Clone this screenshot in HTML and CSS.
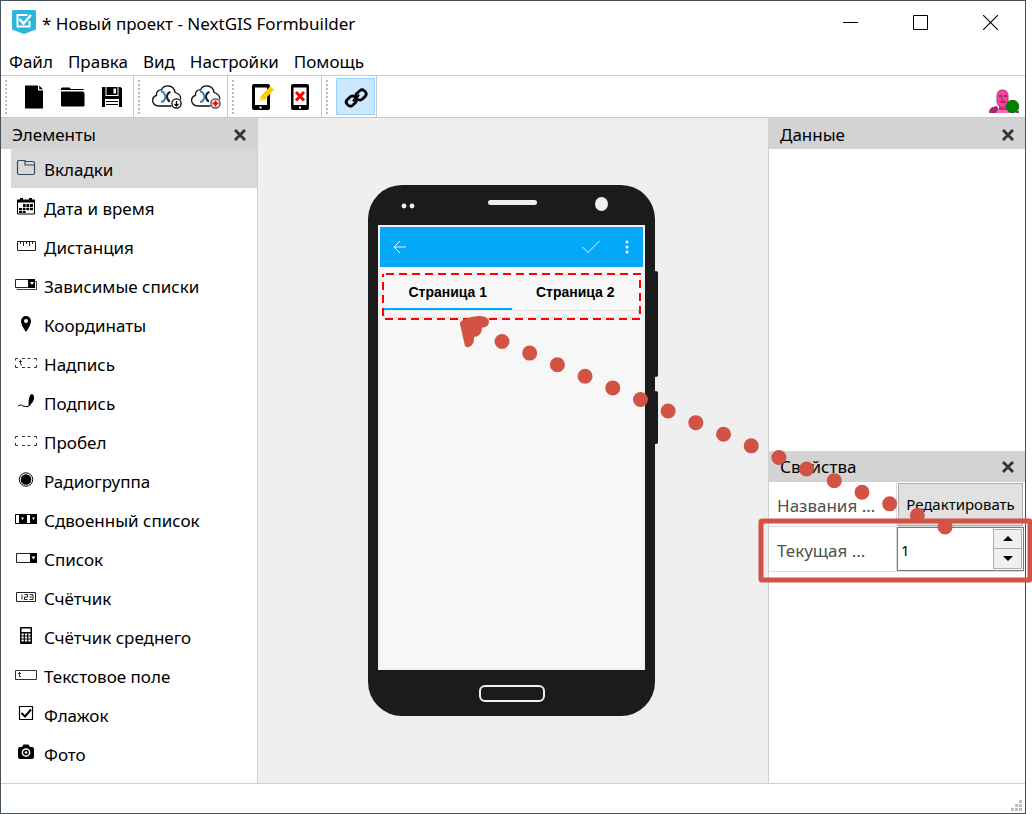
FILE: index.html
```html
<!DOCTYPE html>
<html lang="ru">
<head>
<meta charset="utf-8">
<title>* Новый проект - NextGIS Formbuilder</title>
<link rel="stylesheet" href="styles.css">
</head>
<body>
<div class="window">
  <header class="titlebar">
    <svg class="app-icon" width="24" height="24" viewBox="0 0 24 24"><path d="M1 0h22l1 1v18.500l-12 4.500-12-4.500V1z" fill="#2fb5dc"/><path d="M15.500 5H5.500v11.500h12V11" fill="none" stroke="#fff" stroke-width="2"/><path d="M7.500 9l4 4.500L19 5" fill="none" stroke="#fff" stroke-width="2.500"/></svg>
    <h1 class="title">* Новый проект - NextGIS Formbuilder</h1>
    <div class="window-buttons">
      <button aria-label="Свернуть"><svg width="15" height="15"><path d="M0 7.500h15" stroke="#000"/></svg></button>
      <button aria-label="Развернуть"><svg width="15" height="15"><path d="M.5.500h14v14H.5z" fill="none" stroke="#000"/></svg></button>
      <button aria-label="Закрыть"><svg width="15" height="15"><path d="M0 0l15 15M15 0L0 15" stroke="#000" stroke-width="1.100"/></svg></button>
    </div>
  </header>
  <nav class="menu">
    <button>Файл</button><button>Правка</button><button>Вид</button><button>Настройки</button><button>Помощь</button>
  </nav>
  <div class="toolbar">
    <div class="tool-group">
      <button class="tool" aria-label="Создать"><svg width="30" height="30" viewBox="0 0 30 30"><path d="M6 3.500h13v5h5V26.500H6z"/><path d="M20.200 3.500l3.800 3.800h-3.800z"/></svg></button>
      <button class="tool" aria-label="Открыть"><svg width="30" height="30" viewBox="0 0 30 30"><path d="M3 8V6.500l1-1h7.500l1.500 1.500h12.500v1H3z"/><path d="M3 9.500h22l1.500 1.500v12.500l-1 1H4l-1-1z"/></svg></button>
      <button class="tool" aria-label="Сохранить"><svg width="30" height="30" viewBox="0 0 30 30"><path d="M5 5h3.500v9h13V5h2L25 6.500V25H5z"/><path d="M9.500 5h11v8h-11z"/><path d="M16.500 6.500h2.500v5h-2.500z" fill="#fff"/><path d="M8 17h14v8H8z" fill="#fff"/><path d="M9 19.500h12M9 22.500h12" stroke="#000" stroke-width="1.200"/></svg></button>
    </div>
    <div class="tool-group">
      <button class="tool" aria-label="Загрузить"><svg width="30" height="30" viewBox="0 0 30 30"><path d="M19.500 24H7C-1 23.500-1 15 4.500 13.500c-.5-3.500 2-6 5-5.500C12 2 22 2.500 23 10.500c5 1.500 6 4.500 5.500 7" fill="none" stroke="#111" stroke-width="1.300"/><path d="M9 9.500q3.500 0 4.500 5.500-1 4.500-4.500 5M11 20q1.500-1.500 3-5" fill="none" stroke="#2a7fc8" stroke-width="1.800"/><path d="M18.500 10q-3.500 1-3.500 5 .5 3.500 3 4.500" fill="none" stroke="#222" stroke-width="2"/><circle cx="24.500" cy="21.500" r="4.600" fill="#fff" stroke="#000" stroke-width="1.300"/><path d="M24.500 19v5M22.500 22l2 2 2-2" fill="none" stroke="#000" stroke-width="1.300"/></svg></button>
      <button class="tool" aria-label="Добавить подключение"><svg width="30" height="30" viewBox="0 0 30 30"><path d="M19.500 24H7C-1 23.500-1 15 4.500 13.500c-.5-3.500 2-6 5-5.500C12 2 22 2.500 23 10.500c5 1.500 6 4.500 5.500 7" fill="none" stroke="#111" stroke-width="1.300"/><path d="M9 9.500q3.500 0 4.500 5.500-1 4.500-4.500 5M11 20q1.500-1.500 3-5" fill="none" stroke="#2a7fc8" stroke-width="1.800"/><path d="M18.500 10q-3.500 1-3.500 5 .5 3.500 3 4.500" fill="none" stroke="#222" stroke-width="2"/><circle cx="24.500" cy="21.500" r="4.600" fill="#fff" stroke="#333" stroke-width="1.200"/><path d="M24.500 18.500v6M21.500 21.500h6" fill="none" stroke="#f00" stroke-width="2"/></svg></button>
    </div>
    <div class="tool-group">
      <button class="tool" aria-label="Изменить экран"><svg width="30" height="30" viewBox="0 0 30 30"><rect x="6" y="2" width="18" height="26" rx="2"/><path d="M9 5.500h12V23H9z" fill="#fff"/><path d="M13.500 24.500h2v2h-2z" fill="#fff"/><path d="M13.500 19.500l1-5L24 4.500l4 3-9.500 10.500z" fill="#fc0"/><path d="M14.500 15l3.500 3-4 1.500z" fill="#ffe27a"/></svg></button>
      <button class="tool" aria-label="Удалить экран"><svg width="30" height="30" viewBox="0 0 30 30"><rect x="6" y="2" width="18" height="26" rx="2"/><path d="M8.500 5.500h13V23h-13z" fill="#fff"/><path d="M14 24.500h2v2h-2z" fill="#fff"/><path d="M11 10l8 8.500M19 10l-8 8.500" stroke="#f00" stroke-width="3"/></svg></button>
    </div>
    <div class="tool-group">
      <button class="tool tool-on" aria-label="Связь" aria-pressed="true"><svg width="30" height="30" viewBox="0 0 30 30" fill="none" stroke="#000" stroke-width="2.800" stroke-linecap="round"><path d="M14 15l-2-1q-1.500-.5-3 1l-3 3q-1.800 2 0 4l1.500 1.500q2 1.500 4 0l3-3q1.500-1.500.5-3.500"/><path d="M17 17.500l1.500.5q1.500.3 3-1l3-3q1.500-2 0-4L23 8.500q-2-1.500-4 0l-3.500 3.300q-1.500 1.500-.5 3.500"/><path d="M12.500 18.500l5-5" stroke-width="2.200"/></svg></button>
    </div>
    <button class="user" aria-label="Пользователь"><svg width="32" height="26" viewBox="0 0 32 26"><path d="M1 25q0-5 4-6l4-1 3 7z" fill="#a8286c"/><path d="M8 25l3-5h12l3 5z" fill="#ff67b2"/><path d="M28 23h3v2h-3z" fill="#a8286c"/><path d="M11 17h8v5h-8z" fill="#c82a7c"/><path d="M9 8q0-6 5.500-6T20 8v6q-1 5-4.500 5.500Q9 19 9 13z" fill="#ff3da2" stroke="#a53a75"/><path d="M11 8h3M16 8h3M12.500 14h5" stroke="#802050" stroke-width="1.300"/><path d="M14 8v4h2" fill="none" stroke="#b02870"/><circle cx="24.500" cy="18.500" r="6.700" fill="#008000"/></svg></button>
  </div>
  <main class="workspace">
    <section class="dock dock-left">
      <header class="dock-head"><h2>Элементы</h2><button aria-label="Закрыть"><svg width="12" height="12"><path d="M1 1l10 10M11 1L1 11" stroke="#333" stroke-width="2.800"/></svg></button></header>
      <ul class="elements">
        <li><button class="current"><svg width="22" height="18" viewBox="0 0 22 18" fill="none" stroke="#34495e" stroke-width="1.200"><path d="M2.500 3q0-1.500 1.500-1.500h6V6h9.500v8q0 1.500-1.500 1.500H4q-1.500 0-1.500-1.500zM10 2.500h8q1.500 0 1.500 1.500v2"/></svg>Вкладки</button></li>
        <li><button><svg width="22" height="18" viewBox="0 0 22 18"><path d="M2.500 2.500h17v13.500h-17z" fill="#fff" stroke="#000"/><path d="M2 1.500h3V0h3v1.500h6V0h3v1.500h3v3H2z"/><path d="M8 6h10v4H8zM4 10h14v3H4zM4 13h7v2H4z"/><path d="M4 9.500h14M4 12.500h14M7.500 6v9M11 6v9M14.500 6v9" stroke="#fff" stroke-width=".8"/></svg>Дата и время</button></li>
        <li><button><svg width="22" height="18" viewBox="0 0 22 18" fill="none" stroke="#222"><path d="M2.500 4.500h18v9h-18z"/><path d="M5.500 5v2M8.500 5v4M11.500 5v2M14.500 5v4M17.500 5v2"/></svg>Дистанция</button></li>
        <li><button><svg width="22" height="18" viewBox="0 0 22 18"><path d="M2 12.500v1h19.500v-8h-2" fill="none" stroke="#444"/><path d="M.5 3.500h19v8H.5z" fill="#fff" stroke="#222"/><path d="M13 3h7v9h-7z"/><path d="M15 6h4l-2 3z" fill="#fff"/></svg>Зависимые списки</button></li>
        <li><button><svg width="22" height="18" viewBox="0 0 22 18"><path d="M11 17q-5-7-5-11a5 5 0 0 1 10 0q0 4-5 11z"/><circle cx="11" cy="6" r="2" fill="#fff"/></svg>Координаты</button></li>
        <li><button><svg width="22" height="18" viewBox="0 0 22 18" fill="none" stroke="#333"><path d="M.5 6.500v-2H3M.5 11v2.500H3M19 4.500h2.500v2M21.500 11v2.500H19M7 4.500h3M12.500 4.500h3M7 13.500h3M12.500 13.500h3"/><path d="M5.500 5.500v4.500q0 1 1.500 1M4 7.500h3"/></svg>Надпись</button></li>
        <li><button><svg width="22" height="18" viewBox="0 0 22 18"><path d="M13.500 12q0-9.500 3-11 3 .5 2.500 5-1 4-3 5l-1 2z"/><path d="M3 13q3-2.500 5 0 3 1 5.500.5l2-4" fill="none" stroke="#000"/></svg>Подпись</button></li>
        <li><button><svg width="22" height="18" viewBox="0 0 22 18" fill="none" stroke="#333"><path d="M.5 6.500v-2H3M.5 11v2.500H3M19 4.500h2.500v2M21.500 11v2.500H19M7 4.500h3M12.500 4.500h3M7 13.500h3M12.500 13.500h3"/></svg>Пробел</button></li>
        <li><button><svg width="22" height="18" viewBox="0 0 22 18"><circle cx="11" cy="8.500" r="6.700" fill="none" stroke="#000" stroke-width="1"/><circle cx="11" cy="8.500" r="5.300"/></svg>Радиогруппа</button></li>
        <li><button><svg width="22" height="18" viewBox="0 0 22 18"><path d="M.5 4.500h21v9H.5z" fill="#fff" stroke="#000"/><path d="M4 4h7v10H4zM15 4h7v10h-7zM10 4h2v10h-2z"/><path d="M12 5h2.500v8H12zM6 7.500h3l-1.500 2.500zM17 7.500h3l-1.500 2.500z" fill="#fff"/></svg>Сдвоенный список</button></li>
        <li><button><svg width="22" height="18" viewBox="0 0 22 18"><path d="M1.500 4.500h20v9h-20z" fill="#fff" stroke="#222"/><path d="M15 4h7v10h-7z"/><path d="M16.500 7.500h4l-2 3z" fill="#fff"/></svg>Список</button></li>
        <li><button><svg width="22" height="18" viewBox="0 0 22 18" fill="none" stroke="#222"><path d="M1.500 4.500h19v9h-19z"/><path d="M7 6.500v5M9.500 6.500h3v2.500h-3v2.500h3M14.500 6.500h3.500v5h-3.500M14.500 9h3"/></svg>Счётчик</button></li>
        <li><button><svg width="22" height="18" viewBox="0 0 22 18"><rect x="5" y="0" width="12" height="17" rx="1"/><path d="M6.500 1.500h9v3.500h-9z" fill="#fff"/><path d="M6.500 7.500h9M6.500 10.500h9M6.500 13.500h9" stroke="#fff" stroke-width="2" stroke-dasharray="2.200 1.200"/></svg>Счётчик среднего</button></li>
        <li><button><svg width="22" height="18" viewBox="0 0 22 18" fill="none" stroke="#333"><path d="M.5 4.500h21v9H.5z"/><path d="M4.500 6v4.500H6M3 7.500h3"/></svg>Текстовое поле</button></li>
        <li><button><svg width="22" height="18" viewBox="0 0 22 18" fill="none" stroke="#000"><path d="M4.500 1.500h13v13h-13z" stroke-width="1.200"/><path d="M6.500 8l3.500 3.500 6-7" stroke-width="2"/></svg>Флажок</button></li>
        <li><button><svg width="22" height="18" viewBox="0 0 22 18"><path d="M5 3h2L8.500.5h5L15 3h2q2 0 2 2v8q0 2-2 2H5q-2 0-2-2V5q0-2 2-2z"/><circle cx="11" cy="8.500" r="3.600" stroke="#fff" stroke-width="1.500"/><circle cx="11" cy="8.500" r="1.300" fill="#fff"/></svg>Фото</button></li>
      </ul>
    </section>
    <section class="canvas">
      <div class="phone-wrap">
        <div class="phone">
          <div class="phone-top">
            <svg class="sensors" width="14" height="6"><circle cx="3" cy="3" r="2.400"/><circle cx="11" cy="3" r="2.400"/></svg>
            <span class="speaker"></span>
            <span class="camera"></span>
          </div>
          <div class="screen">
            <div class="appbar">
              <button aria-label="Назад"><svg width="14" height="14"><path d="M13 7H1M7 1L1 7l6 6"/></svg></button>
              <button class="accept" aria-label="Готово"><svg width="18" height="14"><path d="M.5 7L6 12.500 17.500 1"/></svg></button>
              <button aria-label="Ещё"><svg width="14" height="14"><path d="M7 2h0M7 7h0M7 12h0" class="more"/></svg></button>
            </div>
            <div class="tabs-box">
              <svg class="tabs-frame" aria-hidden="true"><rect x="1" y="1"/></svg>
              <div class="tabs">
                <button class="tab tab-active">Страница 1</button>
                <button class="tab">Страница 2</button>
              </div>
              <div class="tab-body"></div>
            </div>
          </div>
          <div class="phone-bottom"><span class="home"></span></div>
        </div>
        <div class="side-keys"><span class="volume"></span><span class="power"></span></div>
      </div>
    </section>
    <aside class="dock dock-right">
      <section class="data">
        <header class="dock-head"><h2>Данные</h2><button aria-label="Закрыть"><svg width="12" height="12"><path d="M1 1l10 10M11 1L1 11" stroke="#333" stroke-width="2.800"/></svg></button></header>
      </section>
      <section class="properties">
        <header class="dock-head"><h2>Свойства</h2><button aria-label="Закрыть"><svg width="12" height="12"><path d="M1 1l10 10M11 1L1 11" stroke="#333" stroke-width="2.800"/></svg></button></header>
        <div class="prop"><label for="names">Названия ...</label><button class="edit" id="names">Редактировать</button></div>
        <div class="prop"><label for="current">Текущая ...</label>
          <div class="spin"><input id="current" type="text" value="1">
            <div class="steps"><button aria-label="Больше"><svg width="10" height="5"><path d="M0 5l5-5 5 5z"/></svg></button><button aria-label="Меньше"><svg width="10" height="5"><path d="M0 0l5 5 5-5z"/></svg></button></div>
          </div>
        </div>
      </section>
    </aside>
  </main>
  <footer class="status"><svg width="11" height="11" fill="#bfbfbf"><path d="M8 0h3v3H8zM4 4h3v3H4zM8 4h3v3H8zM0 8h3v3H0zM4 8h3v3H4zM8 8h3v3H8z"/></svg></footer>
</div>
<svg class="callout" width="1032" height="814" viewBox="0 0 1032 814" aria-hidden="true">
  <path d="M502 341.500L945.500 527.200" fill="none" stroke="#d25345" stroke-width="15" stroke-linecap="round" stroke-dasharray="0 30.020"/>
  <path d="M463 320q7-3.500 15-4 11-.5 11 6.500-1 5-7 5 0 9-8 9.500v2q0 6-5 8-4 1-4.500-3L460 324q0-3 3-4z" fill="#d25345"/>
  <rect x="761" y="521" width="269" height="59" rx="1" fill="none" stroke="#d25345" stroke-width="5"/>
</svg>
</body>
</html>
```
FILE: styles.css
```css
* { box-sizing: border-box; }
body {
  margin: 0;
  padding-right: 6px;
  background: #fff;
  color: #000;
  font: 17px/24px "Noto Sans", "Open Sans", sans-serif;
  position: relative;
}
button, input { font: inherit; color: inherit; padding: 0; border: 0; background: none; }
svg { display: block; flex: none; }
.window { min-height: 100vh; display: flex; flex-direction: column; border: 1px solid #45525c; }

.titlebar { display: flex; align-items: center; height: 46px; padding-left: 11px; gap: 6px; }
.app-icon { margin-bottom: 4px; }
.title { margin: 0; font-size: 17px; font-weight: 400; flex: 1; }
.window-buttons { display: flex; margin-bottom: 4px; }
.window-buttons button { width: 70px; height: 40px; display: grid; place-items: center; }

.menu { display: flex; gap: 15px; height: 28px; padding: 3px 8px 0; }
.menu button { height: 24px; }

.toolbar { display: flex; border: 1px solid #c8c8c8; border-width: 1px 0; height: 43px; }
.tool-group { display: flex; align-items: center; padding: 0 1px 0 4px; border-right: 1px solid #c8c8c8; }
.tool-group::before { content: ""; width: 2px; height: 34px; margin-right: 8px; background: repeating-linear-gradient(#bbb 0 2px, transparent 2px 4px); }
.tool { width: 39px; height: 37px; display: grid; place-items: center; padding-right: 2px; }
.tool-on { background: #cce8ff; border: 1px solid #99d1ff; padding: 0; }
.user { margin-left: auto; align-self: flex-end; padding: 0 5px 3px; }

.workspace { flex: 1; display: flex; }
.dock-head { display: flex; align-items: center; justify-content: space-between; height: 31px; padding: 2px 11px 0; background: #d3d3d3; }
.dock-head h2 { margin: 0; font-size: 17px; font-weight: 400; }
.dock-left { width: 257px; border-right: 1px solid #d0d0d0; }
.elements { list-style: none; margin: 0; padding: 0 0 0 10px; }
.elements button { display: flex; align-items: center; gap: 7px; width: 100%; height: 39px; padding: 2px 0 0 4px; text-align: left; }
.elements svg { margin-bottom: 3px; }
.elements .current { background: #d9d9d9; }

.canvas { flex: 1; display: grid; place-items: center; background: #efefef; }
.phone-wrap { display: flex; }
.phone { width: 287px; padding: 0 10px; background: #1b1b1b; border-radius: 34px; }
.phone-top { display: flex; align-items: center; justify-content: space-between; height: 40px; padding: 0 37px 2px 23px; }
.sensors { fill: #efefef; margin-top: 3px; }
.speaker { width: 49px; height: 5px; margin: 0 0 3px 15px; border-radius: 3px; background: #efefef; }
.camera { width: 13px; height: 14px; border-radius: 50%; background: #efefef; }
.screen { height: 445px; border: 2px solid #f0f2f1; background: #f7f7f7; }
.appbar { display: flex; align-items: center; gap: 22px; height: 40px; padding: 0 9px 0 13px; background: #03a9f7; }
.appbar svg { fill: none; stroke: #e6f5ff; stroke-width: 1; }
.appbar .more { stroke: #fff; stroke-width: 3; stroke-linecap: round; }
.appbar .accept { margin-left: auto; margin-right: -2px; }
.tabs-box { position: relative; margin: 6px 2px 0; padding: 2px; height: 47px; }
.tabs-frame { position: absolute; inset: 0; width: 100%; height: 100%; }
.tabs-frame rect { width: calc(100% - 2px); height: calc(100% - 2px); fill: none; stroke: #f00; stroke-width: 2; stroke-dasharray: 8 5; stroke-dashoffset: -3; }
.tabs { display: flex; height: 35px; }
.tab { flex: 1; font: 700 14px/18px "Liberation Sans", Arial, sans-serif; border-bottom: 2px solid transparent; }
.tab-active { border-color: #03a9f7; }
.tab-body { height: 8px; border: 1px dotted #d0d0d0; }
.phone-bottom { display: grid; place-items: center; height: 46px; }
.home { width: 66px; height: 17px; border: 2px solid #efefef; border-radius: 6px; }
.side-keys { display: flex; flex-direction: column; width: 3px; padding-top: 86px; gap: 14px; }
.side-keys span { background: #1b1b1b; border-radius: 0 2px 2px 0; }
.volume { height: 106px; }
.power { height: 53px; }

.dock-right { display: flex; flex-direction: column; width: 257px; border-left: 1px solid #d0d0d0; }
.dock-right section { flex: 1; }
.prop { display: flex; height: 45px; border-bottom: 1px solid #dcdcdc; color: #505050; }
.prop label { flex: 1; padding: 12px 0 0 8px; border-right: 1px solid #dcdcdc; white-space: nowrap; }
.edit { width: 125px; margin: 1px 2px 0 1px; background: #e1e1e1; border: 1px solid #adadad; color: #000; font-size: 15px; }
.spin { display: flex; width: 127px; margin-right: 1px; padding: 1px; border: 1px solid #7a7a7a; background: #fff; color: #000; }
.spin input { flex: 1; min-width: 0; padding: 2px 0 0 2px; outline: 0; font-size: 15px; }
.steps { display: flex; flex-direction: column; width: 29px; }
.steps button { flex: 1; display: grid; place-items: center; background: #f0f0f0; border: 1px solid #adadad; }
.steps button + button { border-top: 0; }

.status { display: flex; align-items: flex-end; justify-content: flex-end; height: 30px; padding: 0 3px 2px 0; border-top: 1px solid #d0d0d0; }
.callout { position: absolute; left: 0; top: 0; pointer-events: none; }
```
